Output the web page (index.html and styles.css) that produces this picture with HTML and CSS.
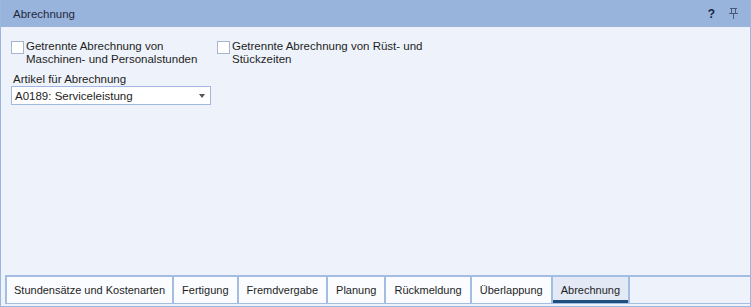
FILE: index.html
```html
<!DOCTYPE html>
<html lang="de">
<head>
    <meta charset="UTF-8">
    <title>Abrechnung</title>
    <link rel="stylesheet" href="styles.css">
</head>
<body>
    <div class="panel">
        <div class="panel-header">
            <span class="panel-title">Abrechnung</span>
            <div class="panel-buttons">
                <span class="help-btn">?</span>
                <svg class="pin-btn" width="9" height="11" viewBox="0 0 9 11">
                    <path d="M1 0.5H8M2.5 0.5V5.5M6.5 0.5V5.5M0 5.5H9M4.5 5.5V11" stroke="#4a5a78" stroke-width="1" fill="none"/>
                </svg>
            </div>
        </div>

        <div class="panel-body">
            <div class="options">
                <label class="check">
                    <span class="box"></span>
                    <span class="check-text">Getrennte Abrechnung von<br>Maschinen- und Personalstunden</span>
                </label>
                <label class="check">
                    <span class="box"></span>
                    <span class="check-text">Getrennte Abrechnung von Rüst- und<br>Stückzeiten</span>
                </label>
            </div>

            <div class="field">
                <div class="field-label">Artikel für Abrechnung</div>
                <div class="select">
                    <span>A0189: Serviceleistung</span>
                    <span class="arrow"></span>
                </div>
            </div>
        </div>

        <div class="tabs">
            <div class="tab">Stundensätze und Kostenarten</div>
            <div class="tab">Fertigung</div>
            <div class="tab">Fremdvergabe</div>
            <div class="tab">Planung</div>
            <div class="tab">Rückmeldung</div>
            <div class="tab">Überlappung</div>
            <div class="tab active">Abrechnung</div>
        </div>
    </div>
</body>
</html>
```

FILE: styles.css
```css
body {
    margin: 0;
    padding: 0;
    background: #eef3fb;
    font-family: 'Liberation Sans', Arial, sans-serif;
    font-size: 11.5px;
    color: #1e1e1e;
}
.panel {
    width: 751px;
    height: 307px;
    box-sizing: border-box;
    border: 1px solid #9cb6de;
    border-top: none;
    display: flex;
    flex-direction: column;
    background: #eef3fb;
}
.panel-header {
    height: 27px;
    background: #98b3dc;
    display: flex;
    align-items: center;
    justify-content: space-between;
    padding: 0 12px 0 12px;
    flex-shrink: 0;
}
.panel-title {
    color: #1e2a3c;
}
.panel-buttons {
    display: flex;
    align-items: center;
    gap: 14px;
}
.help-btn {
    font-weight: bold;
    color: #1a2440;
    font-size: 12px;
}
.pin-btn {
    display: block;
}
.panel-body {
    flex: 1;
    padding: 13px 9px 0 10px;
}
.options {
    display: flex;
    gap: 7px;
}
.check {
    display: flex;
    align-items: flex-start;
    width: 199px;
    line-height: 13px;
}
.check .box {
    width: 13px;
    height: 13px;
    box-sizing: border-box;
    border: 1px solid #a6b4cc;
    background: #fff;
    margin: 1px 2px 0 0;
    flex-shrink: 0;
}
.check-text {
    white-space: nowrap;
}
.field {
    margin-top: 6px;
}
.field-label {
    padding-left: 2px;
    line-height: 14px;
    margin-bottom: 0;
}
.select {
    width: 200px;
    height: 19px;
    box-sizing: border-box;
    border: 1px solid #a0b9e0;
    background: #fff;
    display: flex;
    align-items: center;
    justify-content: space-between;
    padding: 0 5px 0 3px;
}
.arrow {
    width: 0;
    height: 0;
    border-left: 3.5px solid transparent;
    border-right: 3.5px solid transparent;
    border-top: 4px solid #555;
}
.tabs {
    display: flex;
    margin: 0 0 2px 4px;
    border-top: 2px solid #a3bde3;
    border-bottom: 1px solid #a3bde3;
    height: 26px;
    flex-shrink: 0;
    font-size: 11px;
}
.tab {
    background: #fafcff;
    border-left: 2px solid #a3bde3;
    padding: 0 8px 0 8px;
    display: flex;
    align-items: center;
    white-space: nowrap;
}
.tab:first-child {
    padding: 0 7px 0 7px;
}
.tab.active {
    background: #e3e9f5;
    border-right: 2px solid #a3bde3;
    box-shadow: inset 0 -3px 0 #1f4e80;
}
```
